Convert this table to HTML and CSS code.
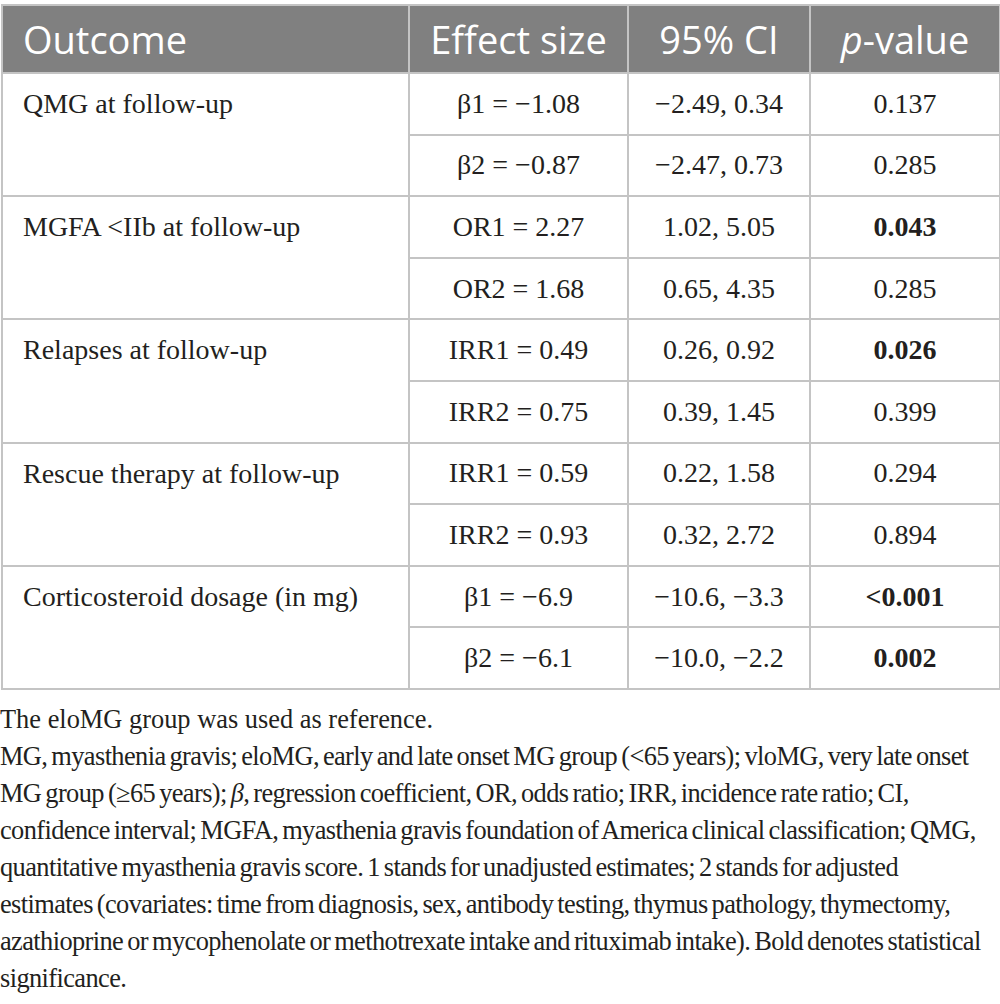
FILE: index.html
```html
<!DOCTYPE html>
<html>
<head>
<meta charset="utf-8">
<link rel="stylesheet" href="styles.css">
</head>
<body>
<div class="page">
<table class="results">
  <colgroup>
    <col class="c1"><col class="c2"><col class="c3"><col class="c4">
  </colgroup>
  <thead>
    <tr>
      <th class="left">Outcome</th>
      <th>Effect size</th>
      <th>95% CI</th>
      <th><i>p</i>-value</th>
    </tr>
  </thead>
  <tbody>
    <tr><td class="outcome" rowspan="2">QMG at follow-up</td><td>β1 = −1.08</td><td>−2.49, 0.34</td><td>0.137</td></tr>
    <tr><td>β2 = −0.87</td><td>−2.47, 0.73</td><td>0.285</td></tr>
    <tr><td class="outcome" rowspan="2">MGFA &lt;IIb at follow-up</td><td>OR1 = 2.27</td><td>1.02, 5.05</td><td><b>0.043</b></td></tr>
    <tr><td>OR2 = 1.68</td><td>0.65, 4.35</td><td>0.285</td></tr>
    <tr><td class="outcome" rowspan="2">Relapses at follow-up</td><td>IRR1 = 0.49</td><td>0.26, 0.92</td><td><b>0.026</b></td></tr>
    <tr><td>IRR2 = 0.75</td><td>0.39, 1.45</td><td>0.399</td></tr>
    <tr><td class="outcome" rowspan="2">Rescue therapy at follow-up</td><td>IRR1 = 0.59</td><td>0.22, 1.58</td><td>0.294</td></tr>
    <tr><td>IRR2 = 0.93</td><td>0.32, 2.72</td><td>0.894</td></tr>
    <tr><td class="outcome" rowspan="2">Corticosteroid dosage (in mg)</td><td>β1 = −6.9</td><td>−10.6, −3.3</td><td><b>&lt;0.001</b></td></tr>
    <tr><td>β2 = −6.1</td><td>−10.0, −2.2</td><td><b>0.002</b></td></tr>
  </tbody>
</table>
<div class="notes">
  <p class="note">The eloMG group was used as reference.</p>
  <p class="note dense">MG, myasthenia gravis; eloMG, early and late onset MG group (&lt;65 years); vloMG, very late onset<br>MG group (≥65 years); <i>β</i>, regression coefficient, OR, odds ratio; IRR, incidence rate ratio; CI,<br>confidence interval; MGFA, myasthenia gravis foundation of America clinical classification; QMG,<br>quantitative myasthenia gravis score. 1 stands for unadjusted estimates; 2 stands for adjusted<br>estimates (covariates: time from diagnosis, sex, antibody testing, thymus pathology, thymectomy,<br>azathioprine or mycophenolate or methotrexate intake and rituximab intake). Bold denotes statistical<br>significance.</p>
</div>
</div>
</body>
</html>
```

FILE: styles.css
```css
html, body {
  margin: 0;
  padding: 0;
  background: #ffffff;
}

.page {
  padding-top: 4px;
  font-family: "Liberation Serif", "Times New Roman", serif;
  color: #231f20;
}

.results {
  border-collapse: collapse;
  width: 999px;
  table-layout: fixed;
  margin-left: 1px;
}

.c1 { width: 407px; }
.c2 { width: 219px; }
.c3 { width: 182px; }
.c4 { width: 190px; }

.results th {
  background: #808080;
  color: #ffffff;
  font-family: "Open Sans", "Liberation Sans", sans-serif;
  font-weight: 400;
  font-size: 38px;
  height: 66px;
  padding: 0;
  text-align: center;
  border: 2px solid #c4c4c4;
}

.results th.left {
  text-align: left;
  padding-left: 20px;
}

.results td {
  font-size: 28px;
  height: 59.6px;
  padding: 0;
  text-align: center;
  vertical-align: middle;
  border: 2px solid #c4c4c4;
  white-space: nowrap;
}

.results td.outcome {
  text-align: left;
  vertical-align: top;
  padding-left: 20px;
  padding-top: 14px;
}

.results b {
  font-weight: 700;
}

.notes {
  margin-top: 11px;
  font-size: 26.4px;
  line-height: 37px;
  white-space: nowrap;
}

.note {
  margin: 0;
}

.note.dense {
  letter-spacing: -0.6px;
  word-spacing: -2px;
}
```
